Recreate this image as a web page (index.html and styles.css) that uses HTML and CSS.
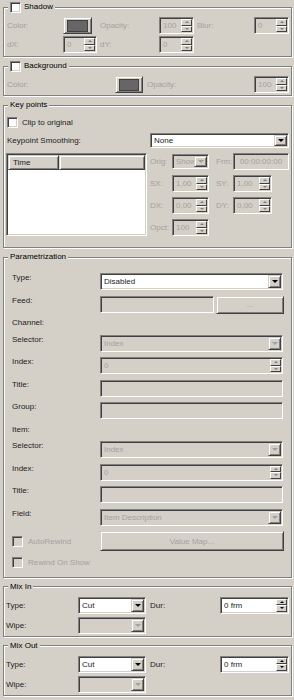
FILE: index.html
```html
<!DOCTYPE html>
<html lang="en">
<head>
    <meta charset="UTF-8">
    <meta name="viewport" content="width=device-width, initial-scale=1.0">
    <title>Layer Properties</title>
    <link rel="stylesheet" href="styles.css">
</head>
<body>
    <fieldset class="group">
        <legend><span class="chk"></span>Shadow</legend>
        <div class="body body-shadow">
            <span class="lbl off">Color:</span>
            <span class="raised swatch"><i></i></span>
            <span class="lbl off ind">Opacity:</span>
            <span class="field spin"><span class="val off">100</span><span class="arrows off"><i></i><i></i></span></span>
            <span class="lbl off ind">Blur:</span>
            <span class="field spin"><span class="val off">0</span><span class="arrows off"><i></i><i></i></span></span>
            <span class="lbl off">dX:</span>
            <span class="field spin"><span class="val off">0</span><span class="arrows off"><i></i><i></i></span></span>
            <span class="lbl off ind">dY:</span>
            <span class="field spin"><span class="val off">0</span><span class="arrows off"><i></i><i></i></span></span>
        </div>
    </fieldset>

    <fieldset class="group">
        <legend><span class="chk"></span>Background</legend>
        <div class="body body-bg">
            <span class="lbl off">Color:</span>
            <span class="raised swatch"><i></i></span>
            <span class="lbl off ind4">Opacity:</span>
            <span class="field spin"><span class="val off">100</span><span class="arrows off"><i></i><i></i></span></span>
        </div>
    </fieldset>

    <fieldset class="group">
        <legend>Key points</legend>
        <div class="body body-keys">
            <label class="check-row"><span class="chk"></span>Clip to original</label>
            <span class="lbl smoothing">Keypoint Smoothing:</span>
            <span class="field combo white"><span class="val">None</span><span class="raised drop"></span></span>
            <div class="field listbox white">
                <div class="list-head">
                    <span class="raised col-time">Time</span>
                    <span class="raised col-rest"></span>
                </div>
            </div>
            <div class="key-props">
                <span class="lbl off">Orig:</span>
                <span class="field combo orig"><span class="val off">Show</span><span class="raised drop off"></span></span>
                <span class="lbl off ind">Frm:</span>
                <span class="field"><span class="val off centered">00:00:00:00</span></span>

                <span class="lbl off">SX:</span>
                <span class="field spin w37"><span class="val off">1,00</span><span class="arrows off"><i></i><i></i></span></span>
                <span class="lbl off ind">SY:</span>
                <span class="field spin w39"><span class="val off">1,00</span><span class="arrows off"><i></i><i></i></span></span>

                <span class="lbl off">DX:</span>
                <span class="field spin w37"><span class="val off">0,00</span><span class="arrows off"><i></i><i></i></span></span>
                <span class="lbl off ind">DY:</span>
                <span class="field spin w39"><span class="val off">0,00</span><span class="arrows off"><i></i><i></i></span></span>

                <span class="lbl off">Opct:</span>
                <span class="field spin w37"><span class="val off">100</span><span class="arrows off"><i></i><i></i></span></span>
            </div>
        </div>
    </fieldset>

    <fieldset class="group">
        <legend>Parametrization</legend>
        <div class="body body-param">
            <span class="lbl">Type:</span>
            <span class="field combo white"><span class="val">Disabled</span><span class="raised drop"></span></span>

            <span class="lbl">Feed:</span>
            <div class="feed-row">
                <span class="field"></span>
                <span class="raised button off">...</span>
            </div>

            <span class="lbl short">Channel:</span>
            <span class="short"></span>

            <span class="lbl">Selector:</span>
            <span class="field combo"><span class="val off">Index</span><span class="raised drop off"></span></span>

            <span class="lbl">Index:</span>
            <span class="field spin"><span class="val off">0</span><span class="arrows off"><i></i><i></i></span></span>

            <span class="lbl">Title:</span>
            <span class="field"></span>

            <span class="lbl">Group:</span>
            <span class="field"></span>

            <span class="lbl short">Item:</span>
            <span class="short"></span>

            <span class="lbl">Selector:</span>
            <span class="field combo"><span class="val off">Index</span><span class="raised drop off"></span></span>

            <span class="lbl">Index:</span>
            <span class="field spin"><span class="val off">0</span><span class="arrows off"><i></i><i></i></span></span>

            <span class="lbl">Title:</span>
            <span class="field"></span>

            <span class="lbl">Field:</span>
            <span class="field combo"><span class="val off">Item Description</span><span class="raised drop off"></span></span>

            <label class="check-row off"><span class="chk grey"></span>AutoRewind</label>
            <span class="raised button tall off">Value Map...</span>

            <label class="check-row short off"><span class="chk grey"></span>Rewind On Show</label>
            <span class="short"></span>
        </div>
    </fieldset>

    <fieldset class="group">
        <legend>Mix In</legend>
        <div class="body body-mix">
            <span class="lbl">Type:</span>
            <span class="field combo white"><span class="val">Cut</span><span class="raised drop"></span></span>
            <span class="lbl ind4">Dur:</span>
            <span class="field spin white"><span class="val">0 frm</span><span class="arrows"><i></i><i></i></span></span>
            <span class="lbl">Wipe:</span>
            <span class="field combo"><span class="val"></span><span class="raised drop off"></span></span>
        </div>
    </fieldset>

    <fieldset class="group">
        <legend>Mix Out</legend>
        <div class="body body-mix">
            <span class="lbl">Type:</span>
            <span class="field combo white"><span class="val">Cut</span><span class="raised drop"></span></span>
            <span class="lbl ind4">Dur:</span>
            <span class="field spin white"><span class="val">0 frm</span><span class="arrows"><i></i><i></i></span></span>
            <span class="lbl">Wipe:</span>
            <span class="field combo"><span class="val"></span><span class="raised drop off"></span></span>
        </div>
    </fieldset>
</body>
</html>
```

FILE: styles.css
```css
* {
    box-sizing: border-box;
}

body {
    margin: 0;
    padding: 1px 2px 0 3px;
    background-color: #d4d0c8;
    font-family: "Liberation Sans", Arial, sans-serif;
    font-size: 8px;
    color: #222;
}

/* group boxes */
.group {
    margin: 0 0 3px 0;
    padding: 0;
    min-width: 0;
    border: 1px solid #808080;
    box-shadow: inset 1px 1px 0 #fff, 1px 1px 0 #fff;
}

.group legend {
    display: flex;
    align-items: center;
    height: 12px;
    margin-left: 4px;
    padding: 0 2px;
    line-height: 12px;
    color: #000;
    background-color: #d4d0c8;
}

.group legend .chk {
    margin-right: 3px;
}

.body {
    display: grid;
    align-items: center;
}

.lbl {
    white-space: nowrap;
}

.off {
    color: #a3a19d;
}

.ind {
    padding-left: 3px;
}

.ind4 {
    padding-left: 4px;
}

/* 3d widgets */
.raised {
    border: 1px solid;
    border-color: #d4d0c8 #404040 #404040 #d4d0c8;
    box-shadow: inset 1px 1px 0 #fff, inset -1px -1px 0 #808080;
    background-color: #d4d0c8;
}

.field {
    display: flex;
    align-items: center;
    height: 17px;
    padding: 1px;
    overflow: hidden;
    white-space: nowrap;
    border: 1px solid;
    border-color: #808080 #fff #fff #808080;
    box-shadow: inset 1px 1px 0 #404040, inset -1px -1px 0 #d4d0c8;
    background-color: #d4d0c8;
}

.field.white {
    background-color: #fff;
}

.field .val {
    flex: 1;
    min-width: 0;
    padding-left: 2px;
    overflow: hidden;
}

.field .centered {
    padding-left: 0;
    text-align: center;
}

.chk {
    display: inline-block;
    flex: none;
    width: 11px;
    height: 11px;
    border: 1px solid;
    border-color: #808080 #fff #fff #808080;
    box-shadow: inset 1px 1px 0 #404040, inset -1px -1px 0 #d4d0c8;
    background-color: #fff;
}

.chk.grey {
    background-color: #d4d0c8;
}

.check-row {
    display: flex;
    align-items: center;
    gap: 5px;
    white-space: nowrap;
}

/* spinner */
.spin .arrows {
    display: flex;
    flex-direction: column;
    flex: none;
    width: 11px;
    height: 100%;
}

.spin .arrows i {
    flex: 1;
    display: flex;
    align-items: center;
    justify-content: center;
    border: 1px solid;
    border-color: #fff #404040 #404040 #fff;
    background-color: #d4d0c8;
}

.spin .arrows i::after {
    content: "";
    border-left: 2px solid transparent;
    border-right: 2px solid transparent;
    border-bottom: 2px solid #000;
}

.spin .arrows i + i::after {
    border-bottom: 0;
    border-top: 2px solid #000;
}

.spin .arrows.off i::after {
    border-bottom-color: #808080;
    border-top-color: #808080;
}

/* combo box */
.combo .drop {
    display: flex;
    align-items: center;
    justify-content: center;
    flex: none;
    width: 13px;
    height: 100%;
}

.combo .drop::after {
    content: "";
    border-left: 3px solid transparent;
    border-right: 3px solid transparent;
    border-top: 3px solid #000;
}

.combo .drop.off::after {
    border-top-color: #a0a0a0;
}

/* colour swatch */
.swatch {
    display: flex;
    height: 17px;
    padding: 2px 3px 1px 3px;
    justify-self: start;
}

.swatch i {
    flex: 1;
    border: 1px solid #404040;
    background-color: #666;
}

/* shadow + background */
.body-shadow {
    grid-template-columns: 56px 34px 62px 35px 60px 35px;
    grid-auto-rows: 17px;
    row-gap: 2px;
    padding: 4px 2px 3px 3px;
}

.body-shadow .swatch {
    width: 29px;
}

.body-bg {
    grid-template-columns: 108px 28px 111px 35px;
    grid-auto-rows: 17px;
    padding: 4px 2px 2px 3px;
}

.body-bg .swatch {
    width: 28px;
}

/* key points */
.body-keys {
    grid-template-columns: 141px 139px;
    column-gap: 3px;
    row-gap: 5px;
    align-items: start;
    padding: 6px 2px 11px 2px;
}

.body-keys .check-row {
    grid-column: 1 / -1;
    gap: 4px;
    margin-left: 1px;
    height: 11px;
}

.body-keys .combo {
    height: 15px;
}

.smoothing {
    align-self: center;
    padding-left: 1px;
}

.listbox {
    display: block;
    height: 83px;
}

.list-head {
    display: flex;
    height: 15px;
}

.list-head .raised {
    display: flex;
    align-items: center;
    padding-left: 4px;
}

.col-time {
    width: 51px;
}

.col-rest {
    flex: 1;
}

.key-props {
    display: grid;
    grid-template-columns: 22px 41px 20px 56px;
    grid-auto-rows: 17px;
    row-gap: 5px;
    align-items: center;
}

.orig {
    width: 37px;
}

.w37 {
    width: 37px;
}

.w39 {
    width: 39px;
}

/* parametrization */
.body-param {
    grid-template-columns: 88px 1fr;
    row-gap: 5.5px;
    padding: 10px 8px 9px 8px;
}

.body-param > * {
    min-height: 17px;
}

.body-param > .short {
    min-height: 11px;
    height: 11px;
}

.feed-row {
    display: flex;
    align-items: flex-start;
    gap: 2px;
    height: 17px;
}

.feed-row .field {
    flex: 1;
}

.button {
    display: flex;
    align-items: center;
    justify-content: center;
    height: 18px;
}

.feed-row .button {
    flex: none;
    width: 68px;
    margin-right: -1px;
}

.button.tall {
    height: 20px;
    margin-right: -1px;
}

/* mix in / out */
.body-mix {
    grid-template-columns: 72px 68px 74px 69px;
    grid-auto-rows: 17px;
    row-gap: 3px;
    padding: 4px 2px 2px 2px;
}
```
